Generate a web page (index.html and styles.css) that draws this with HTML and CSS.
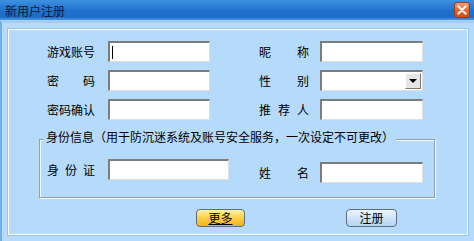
FILE: index.html
```html
<!DOCTYPE html>
<html lang="zh-CN">
<head>
    <meta charset="UTF-8">
    <title>新用户注册</title>
    <link rel="stylesheet" href="styles.css">
</head>
<body>

    <div class="window">
        <div class="titlebar">
            <span class="title">新用户注册</span>
            <span class="close-btn">
                <svg width="10" height="10" viewBox="0 0 10 10">
                    <path d="M1.5 1.5 L8.5 8.5 M8.5 1.5 L1.5 8.5" stroke="#fff2ea" stroke-width="2.4" stroke-linecap="round"/>
                </svg>
            </span>
        </div>

        <div class="frame">
            <div class="panel">
                <div class="form-grid">
                    <span class="label">游戏账号</span>
                    <div class="field field-left"><span class="caret"></span></div>
                    <span class="label label-right">昵称</span>
                    <div class="field field-right"></div>

                    <span class="label">密码</span>
                    <div class="field field-left"></div>
                    <span class="label label-right">性别</span>
                    <div class="field field-right select">
                        <span class="drop-btn"><span class="arrow"></span></span>
                    </div>

                    <span class="label">密码确认</span>
                    <div class="field field-left"></div>
                    <span class="label label-right">推荐人</span>
                    <div class="field field-right"></div>
                </div>

                <fieldset class="id-box">
                    <legend>身份信息（用于防沉迷系统及账号安全服务，一次设定不可更改）</legend>
                    <div class="id-row">
                        <span class="label">身份证</span>
                        <div class="field field-id"></div>
                        <div class="id-name">
                            <span class="label">姓名</span>
                            <div class="field field-right"></div>
                        </div>
                    </div>
                </fieldset>

                <div class="buttons">
                    <button class="btn btn-more"><u>更多</u></button>
                    <button class="btn btn-reg">注册</button>
                </div>
            </div>
        </div>
    </div>

</body>
</html>
```

FILE: styles.css
```css
* {
    box-sizing: border-box;
}

body {
    margin: 0;
    font-family: "Noto Sans CJK SC", "Liberation Sans", sans-serif;
    font-size: 12px;
    color: #000;
}

.window {
    width: 474px;
    height: 241px;
    display: flex;
    flex-direction: column;
}

.titlebar {
    height: 20px;
    display: flex;
    align-items: center;
    justify-content: space-between;
    padding: 1px 4px 0 5px;
    background: linear-gradient(#3d91e2, #1f70cd 55%, #1c6bc9 85%, #4d98e4);
}

.title {
    line-height: 14px;
    color: #0a1a30;
}

.close-btn {
    width: 16px;
    height: 16px;
    display: flex;
    align-items: center;
    justify-content: center;
    border: 1px solid #9c3c14;
    border-radius: 3px;
    background: linear-gradient(#f3a078, #e0652e 50%, #cf4e1a);
    margin-top: -1px;
}

.frame {
    flex: 1;
    background: #b5dafa;
    border-top: 3px solid #a2cef5;
    border-left: 2px solid #6cb0ee;
    padding: 6px 6px 6px 6px;
}

.panel {
    height: 206px;
    border: 1px solid #fff;
    box-shadow: 0 0 0 1px #92c4ee;
    padding: 11px 0 0 30px;
}

.form-grid {
    display: grid;
    grid-template-columns: 48px 115px 99px 114px;
    grid-auto-rows: 21px;
    row-gap: 8px;
    align-items: center;
    margin-left: 8px;
}

.label {
    display: block;
    width: 48px;
    text-align: justify;
    text-align-last: justify;
    line-height: 14px;
}

.label-right {
    width: 50px;
    justify-self: end;
}

.field {
    height: 21px;
    background: #fff;
    border-style: solid;
    border-width: 2px 1px 1px 2px;
    border-color: #7c7c7c #dedede #dedede #7c7c7c;
    display: flex;
    align-items: center;
}

.field-left {
    width: 102px;
    justify-self: end;
}

.field-right {
    width: 103px;
    justify-self: end;
}

.caret {
    width: 1px;
    height: 13px;
    background: #000;
    margin-left: 2px;
}

.select {
    justify-content: flex-end;
    padding-right: 1px;
}

.drop-btn {
    width: 16px;
    height: 16px;
    background: #e6e6e6;
    border-style: solid;
    border-width: 1px;
    border-color: #fff #7a7a7a #7a7a7a #fff;
    display: flex;
    align-items: center;
    justify-content: center;
}

.arrow {
    width: 0;
    height: 0;
    border-left: 4px solid transparent;
    border-right: 4px solid transparent;
    border-top: 4px solid #000;
}

.id-box {
    width: 396px;
    margin: 8px 0 0 0;
    padding: 9px 0 14px 7px;
    border: 1px solid #8f9fb0;
    box-shadow: inset 1px 1px 0 #f4faff, 1px 1px 0 #f4faff;
}

.id-box legend {
    padding: 0 2px 5px 2px;
    margin-left: -3px;
    line-height: 17px;
    background: #b5dafa;
}

.id-row {
    display: flex;
    align-items: flex-start;
}

.id-row > .label {
    margin-top: 4px;
}

.field-id {
    width: 121px;
    margin-left: 13px;
}

.id-name {
    display: flex;
    align-items: center;
    margin: 3px 0 0 30px;
}

.id-name .label {
    width: 50px;
}

.id-name .field {
    margin-left: 11px;
}

.buttons {
    display: flex;
    gap: 101px;
    margin: 11px 0 0 157px;
}

.btn {
    height: 18px;
    padding: 0;
    font-family: inherit;
    font-size: 12px;
    line-height: 14px;
    color: #000;
    border: 1px solid #5e6e82;
    border-radius: 4px;
}

.btn-more {
    width: 49px;
    background: linear-gradient(#fff3a8, #fcd24a 45%, #f5b21c);
}

.btn-reg {
    width: 51px;
    background: linear-gradient(#eef7ff, #cfe5f8 50%, #b3d4f0);
}
```
